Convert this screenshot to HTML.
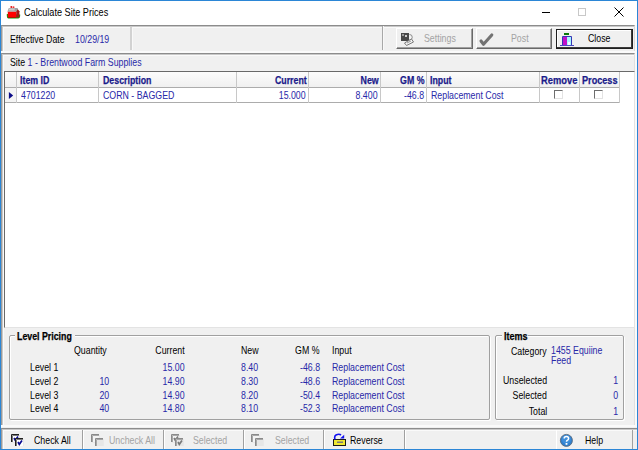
<!DOCTYPE html>
<html><head><meta charset="utf-8">
<style>
*{margin:0;padding:0;box-sizing:border-box}
html,body{width:638px;height:450px;overflow:hidden;background:#f0f0f0}
body{position:relative;font-family:"Liberation Sans",sans-serif;font-size:11px;color:#000}
.a{position:absolute}
.t{position:absolute;white-space:nowrap;line-height:11px;transform-origin:0 0;transform:scaleX(.8)}
.r{transform-origin:100% 0;text-align:right}
.b{font-weight:bold;-webkit-text-stroke:.25px currentColor}
.bl{color:#2828a8}
.hd{color:#1a1a8a;font-weight:bold;-webkit-text-stroke:.25px currentColor}
.dis{color:#a3a3a3}
.vl{position:absolute;width:1px}
.hl{position:absolute;height:1px}
.cb{position:absolute;width:9px;height:9px;border-top:1px solid #6d6d6d;border-left:1px solid #6d6d6d;border-right:1px solid #e3e3e3;border-bottom:1px solid #e3e3e3;background:#fff}
</style></head><body>
<!-- window border -->
<div class="a" style="left:0;top:0;width:638px;height:450px;border:1px solid #2b86d6;z-index:50"></div>
<!-- title bar -->
<div class="a" style="left:1px;top:1px;width:636px;height:24px;background:#fff"></div>
<svg class="a" style="left:6px;top:5px" width="15" height="15" viewBox="0 0 15 15">
  <path d="M0.8 9 Q0.6 13.6 2.5 13.6 H12 Q14.3 13.6 14.2 9.5 Z" fill="#0a9a0a"/>
  <circle cx="5.3" cy="2" r="1" fill="#e01010"/>
  <circle cx="7.5" cy="2.3" r="1" fill="#f03030"/>
  <path d="M2.8 3 H11.6 L12.6 6.8 H1.3 Z" fill="#a0a0a0"/>
  <path d="M3.2 3.6 H9 L8.4 5.4 H2.5 Z" fill="#cacaca"/>
  <path d="M10.2 6.8 L11.8 4.2 L13.4 6.2 V12.4 H10.2 Z" fill="#a01818"/>
  <rect x="1.8" y="6.8" width="8.4" height="5.8" fill="#ff0000"/>
  <rect x="1.8" y="12.2" width="8.4" height="0.6" fill="#b00000"/>
</svg>
<div class="t" style="left:24px;top:7px;transform:scaleX(.83)">Calculate Site Prices</div>
<div class="a" style="left:542px;top:12px;width:8px;height:1px;background:#000"></div>
<div class="a" style="left:578px;top:8px;width:8px;height:8px;border:1px solid #c8c8c8"></div>
<svg class="a" style="left:614px;top:7px" width="11" height="11" viewBox="0 0 11 11"><path d="M0.5 0.5 L9.5 9.5 M9.5 0.5 L0.5 9.5" stroke="#000" stroke-width="1"/></svg>

<!-- toolbar -->
<div class="a" style="left:1px;top:25px;width:636px;height:28px;background:#fafafa"></div>
<div class="a" style="left:1px;top:25px;width:634px;height:26px;border-top:1px solid #8c8c8c;border-left:1px solid #9a9a9a;border-right:1px solid #d8d8d8;background:#f0f0f0;box-shadow:inset 1px 1px 0 #c8c8c8,inset 2px 2px 0 #fafafa"></div>
<div class="t" style="left:10px;top:34px">Effective Date</div>
<div class="t bl" style="left:75px;top:34px">10/29/19</div>
<div class="a" style="left:130px;top:27px;width:2px;height:23px;background:#d2d2d2"></div>
<div class="vl" style="left:132px;top:27px;height:23px;background:#f8f8f8"></div>
<div class="vl" style="left:382px;top:26px;height:24px;background:#a8a8a8"></div>
<div class="vl" style="left:383px;top:26px;height:24px;background:#f8f8f8"></div>

<!-- Settings button -->
<div class="a" style="left:396px;top:28px;width:77px;height:21px;border-top:1px solid #fff;border-left:1px solid #fff;border-right:1px solid #696969;border-bottom:1px solid #696969;box-shadow:inset -1px -1px 0 #a0a0a0"></div>
<svg class="a" style="left:400px;top:32px" width="16" height="15" viewBox="0 0 16 15">
  <rect x="1" y="1" width="8" height="8" fill="#4a4a4a"/>
  <rect x="2" y="2" width="2" height="2" fill="#9a9a9a"/>
  <rect x="5" y="3" width="2" height="2" fill="#cfcfcf"/>
  <path d="M9.5 2.5 A2.6 2.6 0 1 1 9.5 8" fill="#f4f4f4" stroke="#8a8a8a" stroke-width="1"/>
  <path d="M4.5 11 L11.5 7 L13.5 10 L6.5 13.5 Z" fill="#f4f4f4" stroke="#7a7a7a" stroke-width="1"/>
  <path d="M7 11 L11 9" stroke="#999" stroke-width="1"/>
</svg>
<div class="t dis" style="left:424px;top:33px">Settings</div>
<!-- Post button -->
<div class="a" style="left:476px;top:28px;width:76px;height:21px;border-top:1px solid #fff;border-left:1px solid #fff;border-right:1px solid #696969;border-bottom:1px solid #696969;box-shadow:inset -1px -1px 0 #a0a0a0"></div>
<svg class="a" style="left:478px;top:32px" width="17" height="15" viewBox="0 0 17 15"><path d="M3 9 L5.5 12.3 L13.8 3" fill="none" stroke="#737373" stroke-width="3.1" stroke-linecap="round" stroke-linejoin="round"/></svg>
<div class="t dis" style="left:511px;top:33px">Post</div>
<!-- Close button -->
<div class="a" style="left:556px;top:29px;width:77px;height:20px;border:1px solid #1e1e1e;background:#f0f0f0;box-shadow:inset -1px -1px 0 #3a3a3a,inset 1px 1px 0 #fff"></div>
<svg class="a" style="left:560px;top:32px" width="14" height="15" viewBox="0 0 14 15">
  <rect x="4" y="1" width="5" height="2" fill="#0a7a0a"/>
  <rect x="3" y="5" width="4" height="8" fill="#c010c8"/>
  <rect x="7" y="5" width="4" height="8" fill="#a8f4ff"/>
  <rect x="8" y="10" width="2" height="3" fill="#f0ffff"/>
  <path d="M2.5 13.5 V4.5 H11.5 V13.5" fill="none" stroke="#3535b5" stroke-width="1"/>
  <path d="M0 13.5 H14" stroke="#4a4ac0" stroke-width="1"/>
</svg>
<div class="t" style="left:588px;top:33px">Close</div>

<!-- site label bar -->
<div class="a" style="left:1px;top:53px;width:636px;height:374px;background:#fafafa"></div>
<div class="a" style="left:1px;top:53px;width:634px;height:372px;border-top:1px solid #8c8c8c;border-left:1px solid #9a9a9a;border-right:1px solid #e0e0e0;background:#f0f0f0;box-shadow:inset 1px 1px 0 #c8c8c8,inset 2px 2px 0 #fafafa"></div>
<div class="t" style="left:10px;top:57px">Site <span class="bl">1 - Brentwood Farm Supplies</span></div>

<!-- grid -->
<div class="a" style="left:4px;top:71px;width:631px;height:257px;background:#fff;border-top:1px solid #696969;border-left:1px solid #696969;border-right:1px solid #e3e3e3;border-bottom:1px solid #e3e3e3"></div>
<!-- header row bg -->
<div class="a" style="left:5px;top:72px;width:615px;height:15px;background:linear-gradient(#fcfcfc,#f0f0f0)"></div>
<div class="hl" style="left:5px;top:87px;width:615px;background:#acacac"></div>
<div class="hl" style="left:5px;top:102px;width:615px;background:#acacac"></div>
<!-- row header -->
<div class="a" style="left:5px;top:88px;width:11px;height:14px;background:#f4f4f4"></div>
<svg class="a" style="left:8px;top:92px" width="6" height="7" viewBox="0 0 6 7"><path d="M0.9 0 L5.2 3.5 L0.9 7 Z" fill="#0c0c88"/></svg>
<!-- column lines -->
<div class="vl" style="left:16px;top:72px;height:31px;background:#c8c8c8"></div>
<div class="vl" style="left:98px;top:72px;height:31px;background:#c8c8c8"></div>
<div class="vl" style="left:236px;top:72px;height:31px;background:#c8c8c8"></div>
<div class="vl" style="left:308px;top:72px;height:31px;background:#c8c8c8"></div>
<div class="vl" style="left:380px;top:72px;height:31px;background:#c8c8c8"></div>
<div class="vl" style="left:426px;top:72px;height:31px;background:#c8c8c8"></div>
<div class="vl" style="left:539px;top:72px;height:31px;background:#c8c8c8"></div>
<div class="vl" style="left:579px;top:72px;height:31px;background:#c8c8c8"></div>
<div class="vl" style="left:619px;top:72px;height:31px;background:#c8c8c8"></div>
<!-- header text -->
<div class="t hd" style="left:20px;top:75px">Item ID</div>
<div class="t hd" style="left:103px;top:75px">Description</div>
<div class="t hd r" style="right:331px;top:75px">Current</div>
<div class="t hd r" style="right:259px;top:75px">New</div>
<div class="t hd r" style="right:213px;top:75px">GM %</div>
<div class="t hd" style="left:430px;top:75px">Input</div>
<div class="t hd" style="left:541px;top:75px;transform:scaleX(.85)">Remove</div>
<div class="t hd" style="left:582px;top:75px;transform:scaleX(.83)">Process</div>
<!-- row text -->
<div class="t bl" style="left:21px;top:90px">4701220</div>
<div class="t bl" style="left:103px;top:90px">CORN - BAGGED</div>
<div class="t bl r" style="right:332px;top:90px">15.000</div>
<div class="t bl r" style="right:260px;top:90px">8.400</div>
<div class="t bl r" style="right:214px;top:90px">-46.8</div>
<div class="t bl" style="left:431px;top:90px">Replacement Cost</div>
<div class="cb" style="left:554px;top:90px"></div>
<div class="cb" style="left:594px;top:90px"></div>

<!-- Level pricing group -->
<div class="a" style="left:9px;top:335px;width:481px;height:85px;border:1px solid #a0a0a0;border-radius:2px;box-shadow:inset 1px 1px 0 #fff,1px 1px 0 #fff"></div>
<div class="a" style="left:15px;top:330px;width:60px;height:12px;background:#f0f0f0"></div>
<div class="t b" style="left:17px;top:331px">Level Pricing</div>
<div class="t" style="left:74px;top:345px">Quantity</div>
<div class="t r" style="right:453px;top:345px">Current</div>
<div class="t" style="left:241px;top:345px">New</div>
<div class="t r" style="right:318px;top:345px">GM %</div>
<div class="t" style="left:332px;top:345px">Input</div>

<div class="t" style="left:30px;top:362px">Level 1</div>
<div class="t" style="left:30px;top:376px">Level 2</div>
<div class="t" style="left:30px;top:390px">Level 3</div>
<div class="t" style="left:30px;top:403px">Level 4</div>

<div class="t bl r" style="right:529px;top:376px">10</div>
<div class="t bl r" style="right:529px;top:390px">20</div>
<div class="t bl r" style="right:529px;top:403px">40</div>

<div class="t bl r" style="right:453px;top:362px">15.00</div>
<div class="t bl r" style="right:453px;top:376px">14.90</div>
<div class="t bl r" style="right:453px;top:390px">14.90</div>
<div class="t bl r" style="right:453px;top:403px">14.80</div>

<div class="t bl" style="left:241px;top:362px">8.40</div>
<div class="t bl" style="left:241px;top:376px">8.30</div>
<div class="t bl" style="left:241px;top:390px">8.20</div>
<div class="t bl" style="left:241px;top:403px">8.10</div>

<div class="t bl r" style="right:318px;top:362px">-46.8</div>
<div class="t bl r" style="right:318px;top:376px">-48.6</div>
<div class="t bl r" style="right:318px;top:390px">-50.4</div>
<div class="t bl r" style="right:318px;top:403px">-52.3</div>

<div class="t bl" style="left:332px;top:362px">Replacement Cost</div>
<div class="t bl" style="left:332px;top:376px">Replacement Cost</div>
<div class="t bl" style="left:332px;top:390px">Replacement Cost</div>
<div class="t bl" style="left:332px;top:403px">Replacement Cost</div>

<!-- Items group -->
<div class="a" style="left:495px;top:335px;width:129px;height:85px;border:1px solid #a0a0a0;border-radius:2px;box-shadow:inset 1px 1px 0 #fff,1px 1px 0 #fff"></div>
<div class="a" style="left:502px;top:330px;width:26px;height:12px;background:#f0f0f0"></div>
<div class="t b" style="left:504px;top:331px;transform:scaleX(.82)">Items</div>
<div class="t r" style="right:91px;top:346px">Category</div>
<div class="t bl" style="left:551px;top:345px">1455 Equiine</div>
<div class="t bl" style="left:551px;top:355px">Feed</div>
<div class="t r" style="right:91px;top:375px">Unselected</div>
<div class="t r" style="right:91px;top:390px">Selected</div>
<div class="t r" style="right:91px;top:406px">Total</div>
<div class="t bl r" style="right:20px;top:375px">1</div>
<div class="t bl r" style="right:20px;top:390px">0</div>
<div class="t bl r" style="right:20px;top:406px">1</div>

<!-- bottom toolbar -->
<div class="a" style="left:1px;top:428px;width:636px;height:21px;border-top:1px solid #8c8c8c;border-left:1px solid #9a9a9a;background:#f0f0f0;box-shadow:inset 1px 1px 0 #c8c8c8,inset 2px 2px 0 #fafafa"></div>
<div class="vl" style="left:82px;top:430px;height:19px;background:#a0a0a0"></div>
<div class="vl" style="left:83px;top:430px;height:19px;background:#fff"></div>
<div class="vl" style="left:163px;top:430px;height:19px;background:#a0a0a0"></div>
<div class="vl" style="left:164px;top:430px;height:19px;background:#fff"></div>
<div class="vl" style="left:243px;top:430px;height:19px;background:#a0a0a0"></div>
<div class="vl" style="left:244px;top:430px;height:19px;background:#fff"></div>
<div class="vl" style="left:323px;top:430px;height:19px;background:#a0a0a0"></div>
<div class="vl" style="left:324px;top:430px;height:19px;background:#fff"></div>
<div class="vl" style="left:404px;top:430px;height:19px;background:#a0a0a0"></div>
<div class="vl" style="left:405px;top:430px;height:19px;background:#fff"></div>
<div class="vl" style="left:556px;top:430px;height:19px;background:#fff"></div>
<div class="vl" style="left:632px;top:430px;height:19px;background:#a0a0a0"></div>

<svg class="a" style="left:11px;top:434px" width="13" height="12" viewBox="0 0 13 12"><rect x="1" y="1" width="7" height="7" fill="#fff"/><path d="M0.5 8 V0.5 H8" fill="none" stroke="#1e1e1e"/><path d="M1.5 8 V1.5 H8" fill="none" stroke="#7a7a7a"/><path d="M8.5 1 V8.5 H1" fill="none" stroke="#e8e8e8"/><path d="M3 4 L4.3 6.3 L7 2.5" fill="none" stroke="#0a0a90" stroke-width="1.7"/><rect x="5" y="5" width="7" height="7" fill="#fff"/><path d="M4.5 12 V4.5 H12" fill="none" stroke="#1e1e1e"/><path d="M5.5 12 V5.5 H12" fill="none" stroke="#7a7a7a"/><path d="M12.5 5 V12.5 H5" fill="none" stroke="#e8e8e8"/><path d="M7 8 L8.3 10.3 L11 6.5" fill="none" stroke="#0a0a90" stroke-width="1.7"/></svg>
<div class="t" style="left:34px;top:435px">Check All</div>
<svg class="a" style="left:91px;top:434px" width="13" height="12" viewBox="0 0 13 12"><rect x="1" y="1" width="7" height="7" fill="#f4f4f4"/><path d="M0.5 8 V0.5 H8" fill="none" stroke="#8a8a8a"/><path d="M1.5 8 V1.5 H8" fill="none" stroke="#a8a8a8"/><path d="M8.5 1 V8.5 H1" fill="none" stroke="#e8e8e8"/><rect x="5" y="5" width="7" height="7" fill="#e6e6e6"/><path d="M4.5 12 V4.5 H12" fill="none" stroke="#8a8a8a"/><path d="M5.5 12 V5.5 H12" fill="none" stroke="#a8a8a8"/><path d="M12.5 5 V12.5 H5" fill="none" stroke="#e8e8e8"/></svg>
<div class="t dis" style="left:109px;top:435px">Uncheck All</div>
<svg class="a" style="left:171px;top:434px" width="13" height="12" viewBox="0 0 13 12"><rect x="1" y="1" width="7" height="7" fill="#f4f4f4"/><path d="M0.5 8 V0.5 H8" fill="none" stroke="#8a8a8a"/><path d="M1.5 8 V1.5 H8" fill="none" stroke="#a8a8a8"/><path d="M8.5 1 V8.5 H1" fill="none" stroke="#e8e8e8"/><path d="M3 4 L4.3 6.3 L7 2.5" fill="none" stroke="#7a7a7a" stroke-width="1.7"/><rect x="5" y="5" width="7" height="7" fill="#e6e6e6"/><path d="M4.5 12 V4.5 H12" fill="none" stroke="#8a8a8a"/><path d="M5.5 12 V5.5 H12" fill="none" stroke="#a8a8a8"/><path d="M12.5 5 V12.5 H5" fill="none" stroke="#e8e8e8"/><path d="M7 8 L8.3 10.3 L11 6.5" fill="none" stroke="#7a7a7a" stroke-width="1.7"/></svg>
<div class="t dis" style="left:193px;top:435px">Selected</div>
<svg class="a" style="left:251px;top:434px" width="13" height="12" viewBox="0 0 13 12"><rect x="1" y="1" width="7" height="7" fill="#f4f4f4"/><path d="M0.5 8 V0.5 H8" fill="none" stroke="#8a8a8a"/><path d="M1.5 8 V1.5 H8" fill="none" stroke="#a8a8a8"/><path d="M8.5 1 V8.5 H1" fill="none" stroke="#e8e8e8"/><rect x="5" y="5" width="7" height="7" fill="#e6e6e6"/><path d="M4.5 12 V4.5 H12" fill="none" stroke="#8a8a8a"/><path d="M5.5 12 V5.5 H12" fill="none" stroke="#a8a8a8"/><path d="M12.5 5 V12.5 H5" fill="none" stroke="#e8e8e8"/></svg>
<div class="t dis" style="left:275px;top:435px">Selected</div>
<svg class="a" style="left:333px;top:433px" width="13" height="13" viewBox="0 0 13 13">
  <rect x="0.5" y="6.5" width="12" height="6" fill="#f0e830" stroke="#1a1a1a"/>
  <rect x="4" y="8.5" width="6" height="1.5" fill="#7a7a7a"/>
  <path d="M2 6.5 Q1 3 3 2 Q6 0.5 8 2" fill="none" stroke="#1010f0" stroke-width="1.6"/>
  <path d="M7 5.5 L11.2 1.8 L11.2 5.5 Z" fill="#1010f0"/>
</svg>
<div class="t" style="left:350px;top:435px">Reverse</div>
<svg class="a" style="left:559px;top:433px" width="15" height="15" viewBox="0 0 15 15">
  <circle cx="7.4" cy="7.4" r="6.0" fill="#2f7fcf" stroke="#5a6a7a" stroke-width="0.9"/>
  <circle cx="7.4" cy="6.4" r="4.5" fill="#4a98e0" opacity="0.6"/>
  <path d="M5.2 5.6 Q5.2 3.6 7.4 3.6 Q9.6 3.6 9.6 5.4 Q9.6 6.6 8.2 7.3 Q7.5 7.7 7.5 8.8" fill="none" stroke="#fff" stroke-width="1.5"/>
  <rect x="6.6" y="10" width="1.8" height="1.8" fill="#fff"/>
</svg>
<div class="t" style="left:585px;top:435px">Help</div>
</body></html>
